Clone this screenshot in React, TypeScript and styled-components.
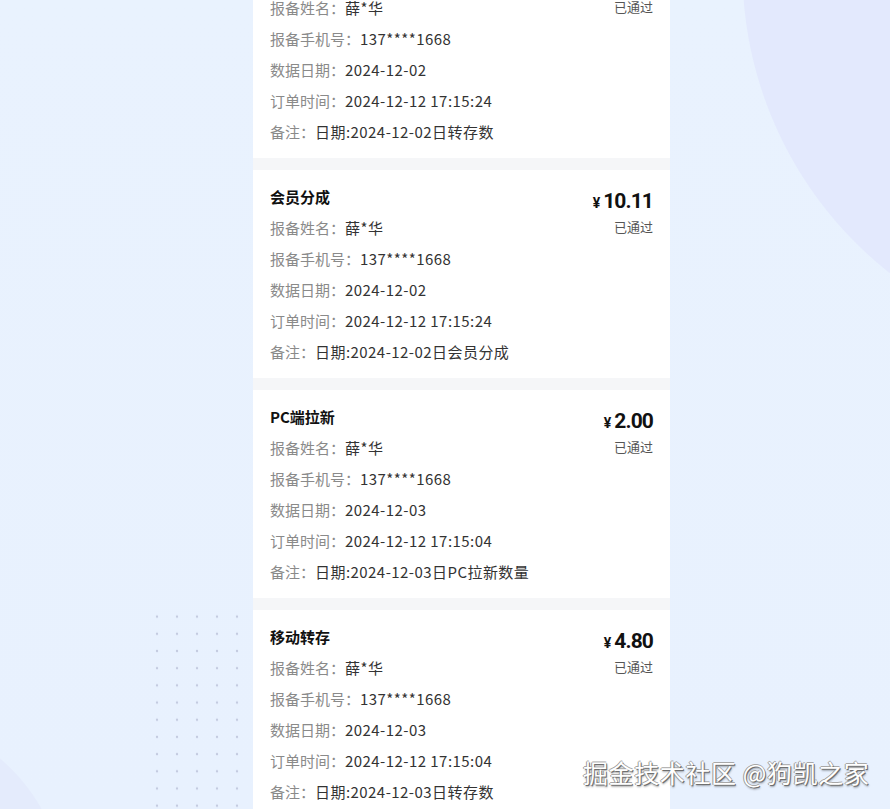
import styled, { createGlobalStyle } from 'styled-components';

const GlobalStyle = createGlobalStyle`
    html, body {
        margin: 0;
        height: 809px;
        overflow: hidden;
    }
    body {
        font-family: "Noto Sans CJK SC", "Noto Sans", sans-serif;
        background-color: #e9f2fe;
        background-image:
            radial-gradient(circle at 1128px -30px, #e3e9fd 0, #e3e9fd 385px, rgba(227, 233, 253, 0) 386px),
            radial-gradient(circle at -120px 900px, #e4ebfc 0, #e4ebfc 185px, rgba(228, 235, 252, 0) 186px),
            linear-gradient(180deg, #e9f2fe 0%, #e8f1fe 100%);
    }
`;

const Page = styled.div`
    position: relative;
    height: 809px;
    overflow: hidden;
`;

const List = styled.div`
    margin-left: 253px;
    margin-top: -50px;
    width: 417px;
    background: #f5f6f8;
    display: flex;
    flex-direction: column;
    gap: 12px;
`;

const Card = styled.div`
    background: #ffffff;
    display: flex;
    justify-content: space-between;
    padding: 12px 17px 11px 17px;
    height: 208px;
    box-sizing: border-box;
`;

const Info = styled.div`
    display: flex;
    flex-direction: column;
`;

const Title = styled.div`
    font-size: 15px;
    font-weight: 700;
    color: #111;
    line-height: 30px;
`;

const Row = styled.div`
    font-size: 15px;
    line-height: 31px;
    color: #333;
    white-space: nowrap;
`;

const Label = styled.span`
    color: #8a8a8a;
`;

const Value = styled.span`
    letter-spacing: 0.45px;
`;

const Side = styled.div`
    display: flex;
    flex-direction: column;
    align-items: flex-end;
    padding-top: 5px;
`;

const Price = styled.div`
    font-family: Roboto, "Liberation Sans", sans-serif;
    font-weight: 700;
    color: #111;
    height: 28px;
    line-height: 28px;
    font-size: 21px;
    letter-spacing: -0.9px;
`;

const Yen = styled.span`
    font-size: 14px;
    margin-right: 3px;
    letter-spacing: 0;
`;

const Status = styled.div`
    font-size: 13px;
    line-height: 24px;
    color: #555;
`;

const Dots = styled.div`
    position: absolute;
    left: 147px;
    top: 608px;
    width: 100px;
    height: 210px;
    background-image: radial-gradient(circle, #c4cbe0 1.1px, rgba(196, 203, 224, 0) 1.6px);
    background-size: 20px 17.2px;
`;

const Watermark = styled.div`
    position: absolute;
    left: 583px;
    top: 754px;
    font-size: 25px;
    letter-spacing: 0.6px;
    color: #ffffff;
    text-shadow: 1px 1px 0 #6f6f6f, -1px 0 0 #9a9a9a, 0 -1px 0 #a8a8a8, 1px 2px 2px rgba(0, 0, 0, 0.35);
    white-space: nowrap;
`;

const orders = [
    {
        title: '移动转存',
        price: '3.20',
        date: '2024-12-02',
        time: '2024-12-12 17:15:24',
        note: '日期:2024-12-02日转存数',
    },
    {
        title: '会员分成',
        price: '10.11',
        date: '2024-12-02',
        time: '2024-12-12 17:15:24',
        note: '日期:2024-12-02日会员分成',
    },
    {
        title: 'PC端拉新',
        price: '2.00',
        date: '2024-12-03',
        time: '2024-12-12 17:15:04',
        note: '日期:2024-12-03日PC拉新数量',
    },
    {
        title: '移动转存',
        price: '4.80',
        date: '2024-12-03',
        time: '2024-12-12 17:15:04',
        note: '日期:2024-12-03日转存数',
    },
];

export default function App() {
    return (
        <>
            <GlobalStyle />
            <Page>
                <Dots />
                <List>
                    {orders.map((o, i) => (
                        <Card key={i}>
                            <Info>
                                <Title>{o.title}</Title>
                                <Row>
                                    <Label>报备姓名：</Label>
                                    <Value>薛*华</Value>
                                </Row>
                                <Row>
                                    <Label>报备手机号：</Label>
                                    <Value>137****1668</Value>
                                </Row>
                                <Row>
                                    <Label>数据日期：</Label>
                                    <Value>{o.date}</Value>
                                </Row>
                                <Row>
                                    <Label>订单时间：</Label>
                                    <Value>{o.time}</Value>
                                </Row>
                                <Row>
                                    <Label>备注：</Label>
                                    <Value>{o.note}</Value>
                                </Row>
                            </Info>
                            <Side>
                                <Price>
                                    <Yen>¥</Yen>
                                    {o.price}
                                </Price>
                                <Status>已通过</Status>
                            </Side>
                        </Card>
                    ))}
                </List>
                <Watermark>掘金技术社区 @狗凯之家</Watermark>
            </Page>
        </>
    );
}
